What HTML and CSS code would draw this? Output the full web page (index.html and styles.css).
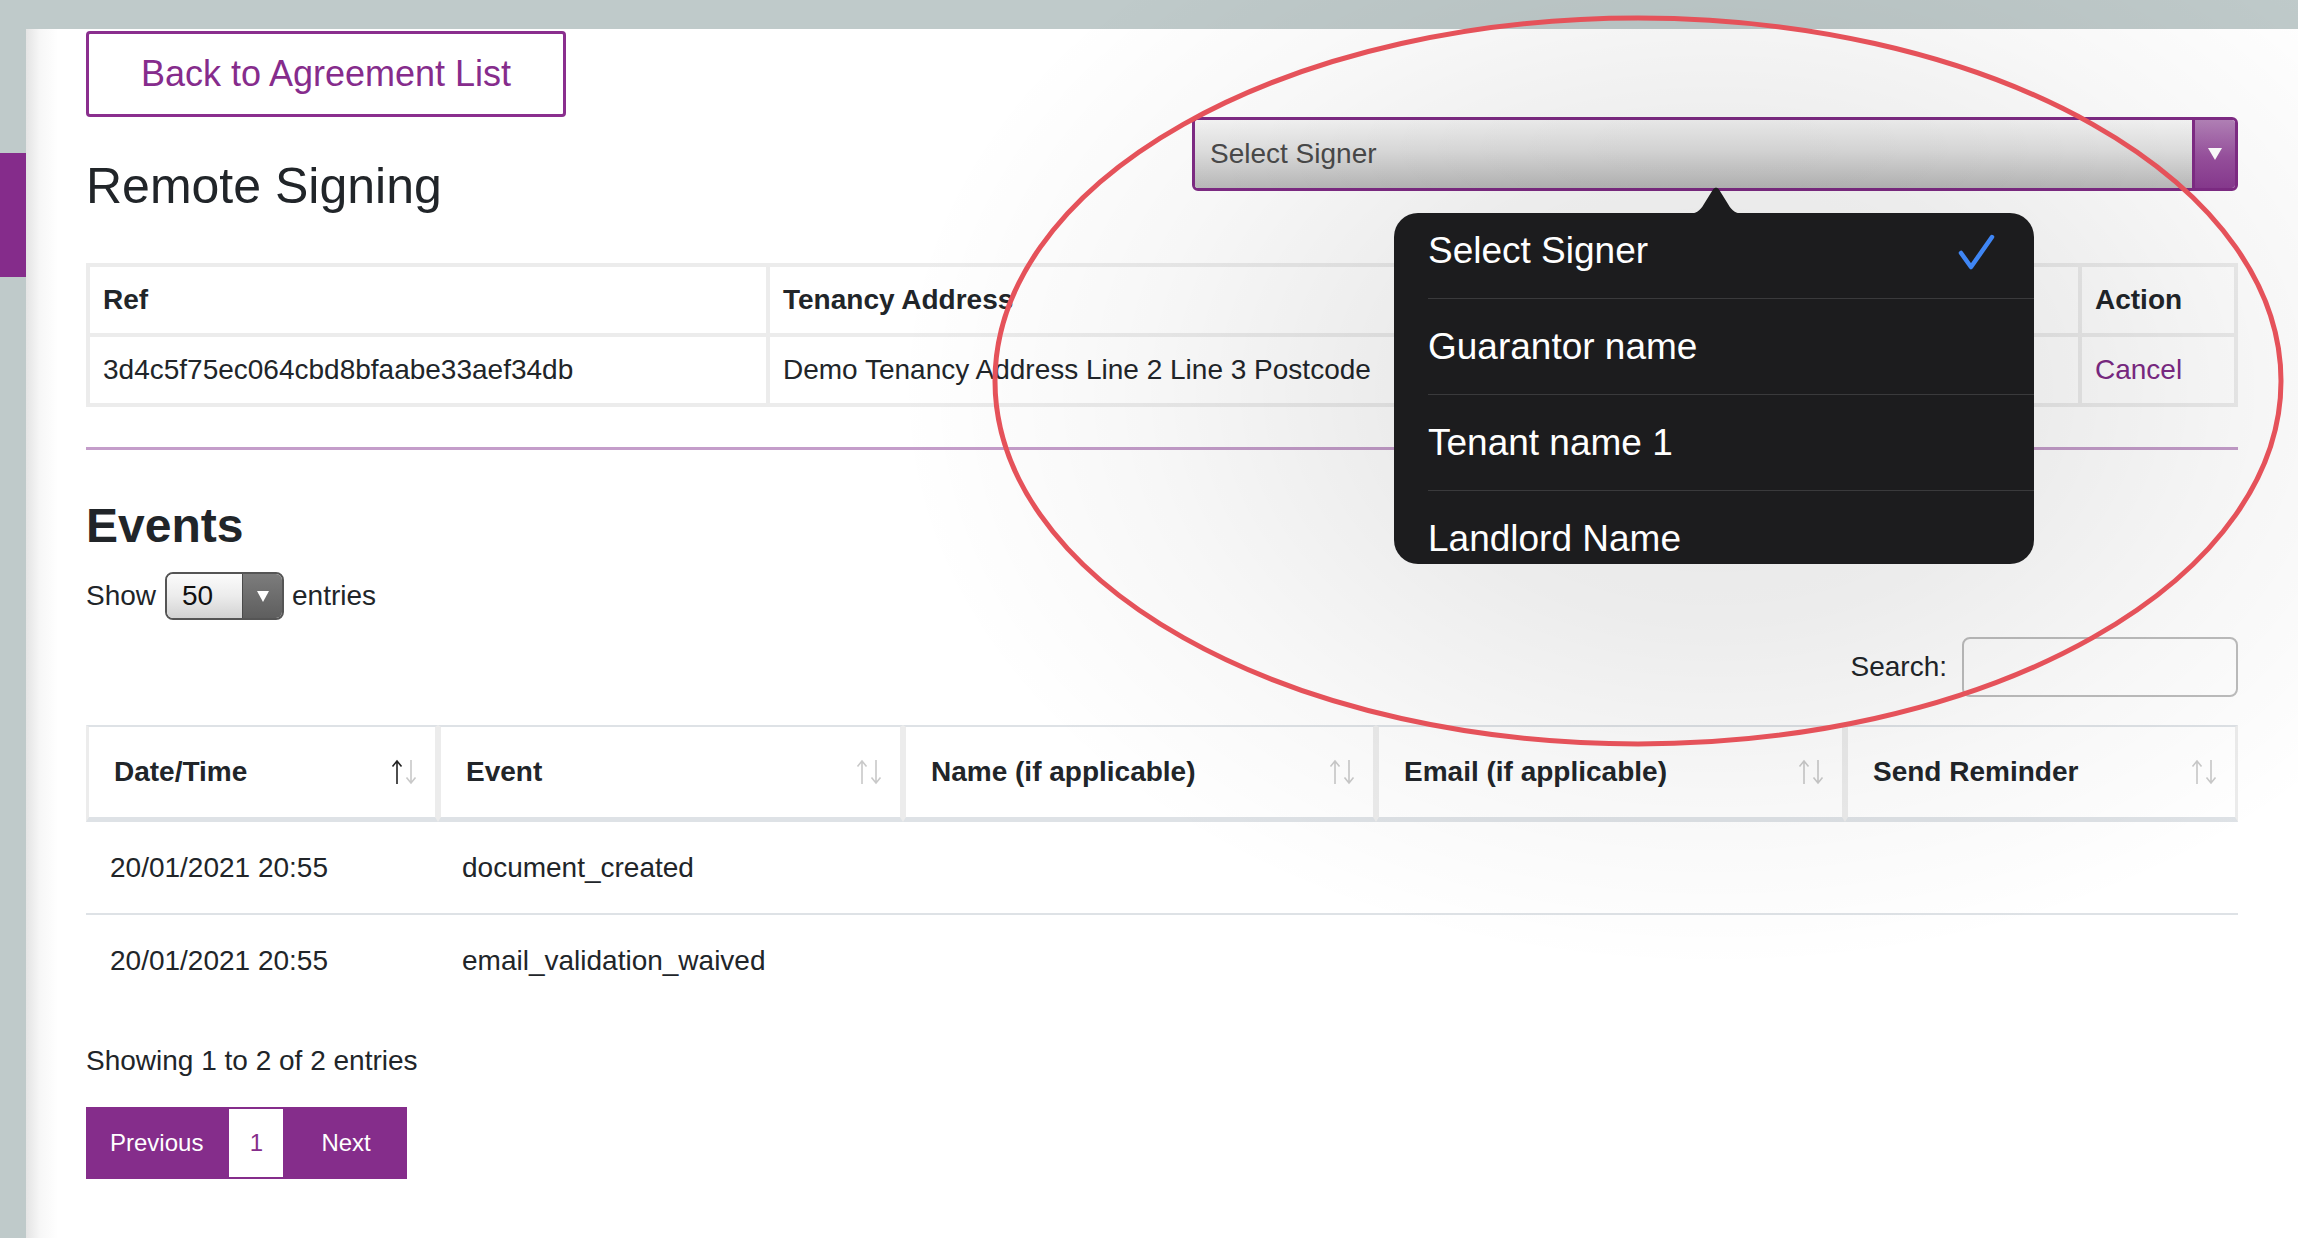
FILE: index.html
```html
<!DOCTYPE html>
<html lang="en">
<head>
<meta charset="utf-8">
<title>Remote Signing</title>
<link rel="stylesheet" href="styles.css">
</head>
<body>
<div class="topbar"></div>
<div class="frame">
  <div class="rail"><div class="rail-tab"></div></div>
  <main class="panel">
    <div class="head">
      <div class="head-left">
        <a class="back-btn" href="#">Back to Agreement List</a>
        <h1 class="title">Remote Signing</h1>
      </div>
      <div class="signer-select">
        <div class="signer-value">Select Signer</div>
        <div class="signer-arrow"><span class="tri tri-white"></span></div>
      </div>
    </div>

    <table class="info-table">
      <colgroup>
        <col class="c-ref"><col class="c-addr"><col class="c-status"><col>
      </colgroup>
      <thead>
        <tr><th>Ref</th><th>Tenancy Address</th><th></th><th>Action</th></tr>
      </thead>
      <tbody>
        <tr><td>3d4c5f75ec064cbd8bfaabe33aef34db</td><td>Demo Tenancy Address Line 2 Line 3 Postcode</td><td></td><td><a class="link" href="#">Cancel</a></td></tr>
      </tbody>
    </table>

    <hr class="divider">

    <h2 class="events-title">Events</h2>
    <div class="show-row">
      <span>Show</span>
      <div class="len-select">
        <div class="len-value">50</div>
        <div class="len-arrow"><span class="tri tri-white small"></span></div>
      </div>
      <span>entries</span>
    </div>
    <div class="search-row">
      <label class="search-label">Search:</label>
      <div class="search-input"></div>
    </div>

    <table class="events-table">
      <colgroup>
        <col class="e1"><col class="e2"><col class="e3"><col class="e4"><col>
      </colgroup>
      <thead>
        <tr>
          <th><div class="th-in"><span>Date/Time</span><svg class="sort" viewBox="0 0 28 26" width="28" height="26"><path d="M7 25V2M2.5 7.5L7 2l4.5 5.5" stroke="#222" /><path d="M21 1v23M16.5 18.5L21 24l4.5-5.5" stroke="#c9c9c9"/></svg></div></th>
          <th><div class="th-in"><span>Event</span><svg class="sort" viewBox="0 0 28 26" width="28" height="26"><path d="M7 25V2M2.5 7.5L7 2l4.5 5.5" stroke="#c9c9c9" /><path d="M21 1v23M16.5 18.5L21 24l4.5-5.5" stroke="#c9c9c9"/></svg></div></th>
          <th><div class="th-in"><span>Name (if applicable)</span><svg class="sort" viewBox="0 0 28 26" width="28" height="26"><path d="M7 25V2M2.5 7.5L7 2l4.5 5.5" stroke="#c9c9c9" /><path d="M21 1v23M16.5 18.5L21 24l4.5-5.5" stroke="#c9c9c9"/></svg></div></th>
          <th><div class="th-in"><span>Email (if applicable)</span><svg class="sort" viewBox="0 0 28 26" width="28" height="26"><path d="M7 25V2M2.5 7.5L7 2l4.5 5.5" stroke="#c9c9c9" /><path d="M21 1v23M16.5 18.5L21 24l4.5-5.5" stroke="#c9c9c9"/></svg></div></th>
          <th><div class="th-in"><span>Send Reminder</span><svg class="sort" viewBox="0 0 28 26" width="28" height="26"><path d="M7 25V2M2.5 7.5L7 2l4.5 5.5" stroke="#c9c9c9" /><path d="M21 1v23M16.5 18.5L21 24l4.5-5.5" stroke="#c9c9c9"/></svg></div></th>
        </tr>
      </thead>
      <tbody>
        <tr class="row-line"><td>20/01/2021 20:55</td><td>document_created</td><td></td><td></td><td></td></tr>
        <tr><td>20/01/2021 20:55</td><td>email_validation_waived</td><td></td><td></td><td></td></tr>
      </tbody>
    </table>

    <div class="showing">Showing 1 to 2 of 2 entries</div>
    <div class="pager">
      <a class="pg pg-prev" href="#">Previous</a>
      <a class="pg pg-cur" href="#">1</a>
      <a class="pg pg-next" href="#">Next</a>
    </div>
  </main>
</div>

<div class="dim"></div>

<svg class="pop-arrow" width="60" height="28" viewBox="0 0 60 28"><path d="M0 28C10 28 14 25 18 18L27 3.5C28.5 1 31.5 1 33 3.5L42 18C46 25 50 28 60 28Z" fill="#1c1c1e"/></svg>
<div class="popover">
  <ul class="pop-list">
    <li class="pop-item">Select Signer
      <svg class="check" width="40" height="40" viewBox="0 0 40 40"><path d="M5 21L15 35L36 5" fill="none" stroke="#3f86f5" stroke-width="4.5" stroke-linecap="round" stroke-linejoin="round"/></svg>
    </li>
    <li class="pop-item">Guarantor name</li>
    <li class="pop-item">Tenant name 1</li>
    <li class="pop-item">Landlord Name</li>
  </ul>
</div>

<svg class="annot" width="2298" height="1238" viewBox="0 0 2298 1238"><ellipse cx="1638" cy="381" rx="643" ry="363" fill="none" stroke="#e5525a" stroke-width="5"/></svg>
</body>
</html>
```

FILE: styles.css
```css
* { box-sizing: border-box; }

html, body {
  margin: 0;
  padding: 0;
}

body {
  position: relative;
  width: 2298px;
  height: 1238px;
  overflow: hidden;
  background: #bfcaca;
  font-family: "Liberation Sans", Arial, Helvetica, sans-serif;
  color: #212529;
}

.topbar { height: 29px; }

.frame {
  display: flex;
  height: 1209px;
}

.rail {
  width: 26px;
  flex: none;
}

.rail-tab {
  margin-top: 124px;
  height: 124px;
  background: #852c8b;
}

.panel {
  flex: 1;
  min-width: 0;
  width: 2272px;
  background: linear-gradient(90deg, #e4e4e4 0, #f7f7f7 14px, #fff 32px);
  padding: 2px 60px 0 60px;
}

/* header */
.head {
  display: flex;
  justify-content: space-between;
  align-items: flex-start;
}

.back-btn {
  display: block;
  width: 480px;
  height: 86px;
  border: 3px solid #8a2f8e;
  border-radius: 4px;
  color: #862c8c;
  font-size: 36px;
  line-height: 80px;
  text-align: center;
  text-decoration: none;
}

.title {
  margin: 40px 0 0;
  font-size: 50px;
  line-height: 58px;
  font-weight: normal;
}

.signer-select {
  margin-top: 86px;
  width: 1046px;
  height: 74px;
  border: 3px solid #7f2b85;
  border-radius: 6px;
  display: flex;
  overflow: hidden;
}

.signer-value {
  flex: 1;
  background: linear-gradient(180deg, #f7f7f7 0%, #e2e2e2 45%, #bdbdbd 100%);
  color: #4a4a4a;
  font-size: 28px;
  line-height: 68px;
  padding-left: 15px;
}

.signer-arrow {
  width: 43px;
  border-left: 3px solid #7f2b85;
  background: linear-gradient(180deg, #b382b8 0%, #98509e 55%, #893a90 100%);
  display: flex;
  align-items: center;
  justify-content: center;
}

.tri {
  width: 0;
  height: 0;
  border-left: 7px solid transparent;
  border-right: 7px solid transparent;
  border-top: 12px solid #fff;
}

.tri.small {
  border-left-width: 6px;
  border-right-width: 6px;
  border-top-width: 11px;
}

/* info table */
.info-table {
  margin-top: 48px;
  width: 100%;
  table-layout: fixed;
  border-collapse: collapse;
  border: 4px solid #ececec;
  font-size: 28px;
}

.c-ref { width: 680px; }
.c-addr { width: 792px; }
.c-status { width: 520px; }

.info-table th,
.info-table td {
  border: 4px solid #ececec;
  height: 70px;
  padding: 0 13px;
  text-align: left;
  white-space: nowrap;
  overflow: hidden;
}

.info-table th { font-weight: bold; }

.link {
  color: #7d2a86;
  text-decoration: none;
}

.divider {
  margin: 40px 0 0;
  height: 3px;
  border: 0;
  background: #c49dca;
}

/* events */
.events-title {
  margin: 48px 0 0;
  font-size: 48px;
  line-height: 56px;
  font-weight: bold;
}

.show-row {
  margin-top: 18px;
  display: flex;
  align-items: center;
  font-size: 28px;
}

.len-select {
  margin: 0 8px 0 9px;
  width: 119px;
  height: 48px;
  border: 2px solid #555;
  border-radius: 8px;
  display: flex;
  overflow: hidden;
}

.len-value {
  flex: 1;
  background: linear-gradient(180deg, #fbfbfb 0%, #ececec 50%, #d2d2d2 100%);
  padding-left: 15px;
  line-height: 44px;
  font-size: 28px;
  color: #111;
}

.len-arrow {
  width: 40px;
  border-left: 1px solid #4a4a4a;
  background: linear-gradient(180deg, #7c7c7c 0%, #5e5e5e 100%);
  display: flex;
  align-items: center;
  justify-content: center;
}

.search-row {
  margin-top: 17px;
  display: flex;
  justify-content: flex-end;
  align-items: center;
  gap: 15px;
  font-size: 28px;
}

.search-input {
  width: 276px;
  height: 60px;
  border: 2px solid #bdbdbd;
  border-radius: 8px;
  background: #fff;
}

.events-table {
  margin-top: 28px;
  width: 100%;
  table-layout: fixed;
  border-collapse: separate;
  border-spacing: 0;
  font-size: 28px;
}

.e1 { width: 352px; }
.e2 { width: 465px; }
.e3 { width: 473px; }
.e4 { width: 469px; }

.events-table th {
  height: 97px;
  border-top: 2px solid #dee2e6;
  border-bottom: 5px solid #dee2e6;
  border-left: 3px solid #ececec;
  border-right: 3px solid #ececec;
  padding: 0 17px 0 25px;
  text-align: left;
  font-weight: bold;
}

.th-in {
  display: flex;
  justify-content: space-between;
  align-items: center;
}

.sort {
  flex: none;
  fill: none;
  stroke-width: 1.6;
}

.events-table td {
  height: 91px;
  padding: 0 22px 0 24px;
  white-space: nowrap;
}

.events-table .row-line td {
  height: 93px;
  border-bottom: 2px solid #dee2e6;
}

.showing {
  margin-top: 39px;
  font-size: 28px;
  line-height: 32px;
}

.pager {
  margin-top: 30px;
  display: inline-flex;
  height: 72px;
  background: #852d8b;
}

.pg {
  font-size: 24px;
  line-height: 72px;
  color: #fff;
  text-decoration: none;
}

.pg-prev { padding: 0 26px 0 24px; }

.pg-cur {
  width: 54px;
  margin: 2px 0;
  line-height: 68px;
  background: #fff;
  color: #852d8b;
  text-align: center;
}

.pg-next { padding: 0 36px 0 38px; }

/* overlays */
.dim {
  position: absolute;
  left: 0;
  top: 0;
  width: 2298px;
  height: 1238px;
  pointer-events: none;
  background: radial-gradient(ellipse 820px 580px at 1714px 390px,
    rgba(0, 0, 0, 0.1) 0%,
    rgba(0, 0, 0, 0.075) 40%,
    rgba(0, 0, 0, 0.03) 70%,
    rgba(0, 0, 0, 0) 100%);
}

.pop-arrow {
  position: absolute;
  left: 1686px;
  top: 186px;
}

.popover {
  position: absolute;
  left: 1394px;
  top: 213px;
  width: 640px;
  height: 351px;
  background: #1c1c1e;
  border-radius: 24px;
  overflow: hidden;
}

.pop-list {
  list-style: none;
  margin: -10px 0 0;
  padding: 0;
}

.pop-item {
  position: relative;
  margin-left: 34px;
  height: 96px;
  line-height: 95px;
  border-bottom: 1px solid #3a3a3c;
  color: #fff;
  font-size: 37px;
}

.check {
  position: absolute;
  left: 528px;
  top: 29px;
}

.annot {
  position: absolute;
  left: 0;
  top: 0;
  pointer-events: none;
}
```
